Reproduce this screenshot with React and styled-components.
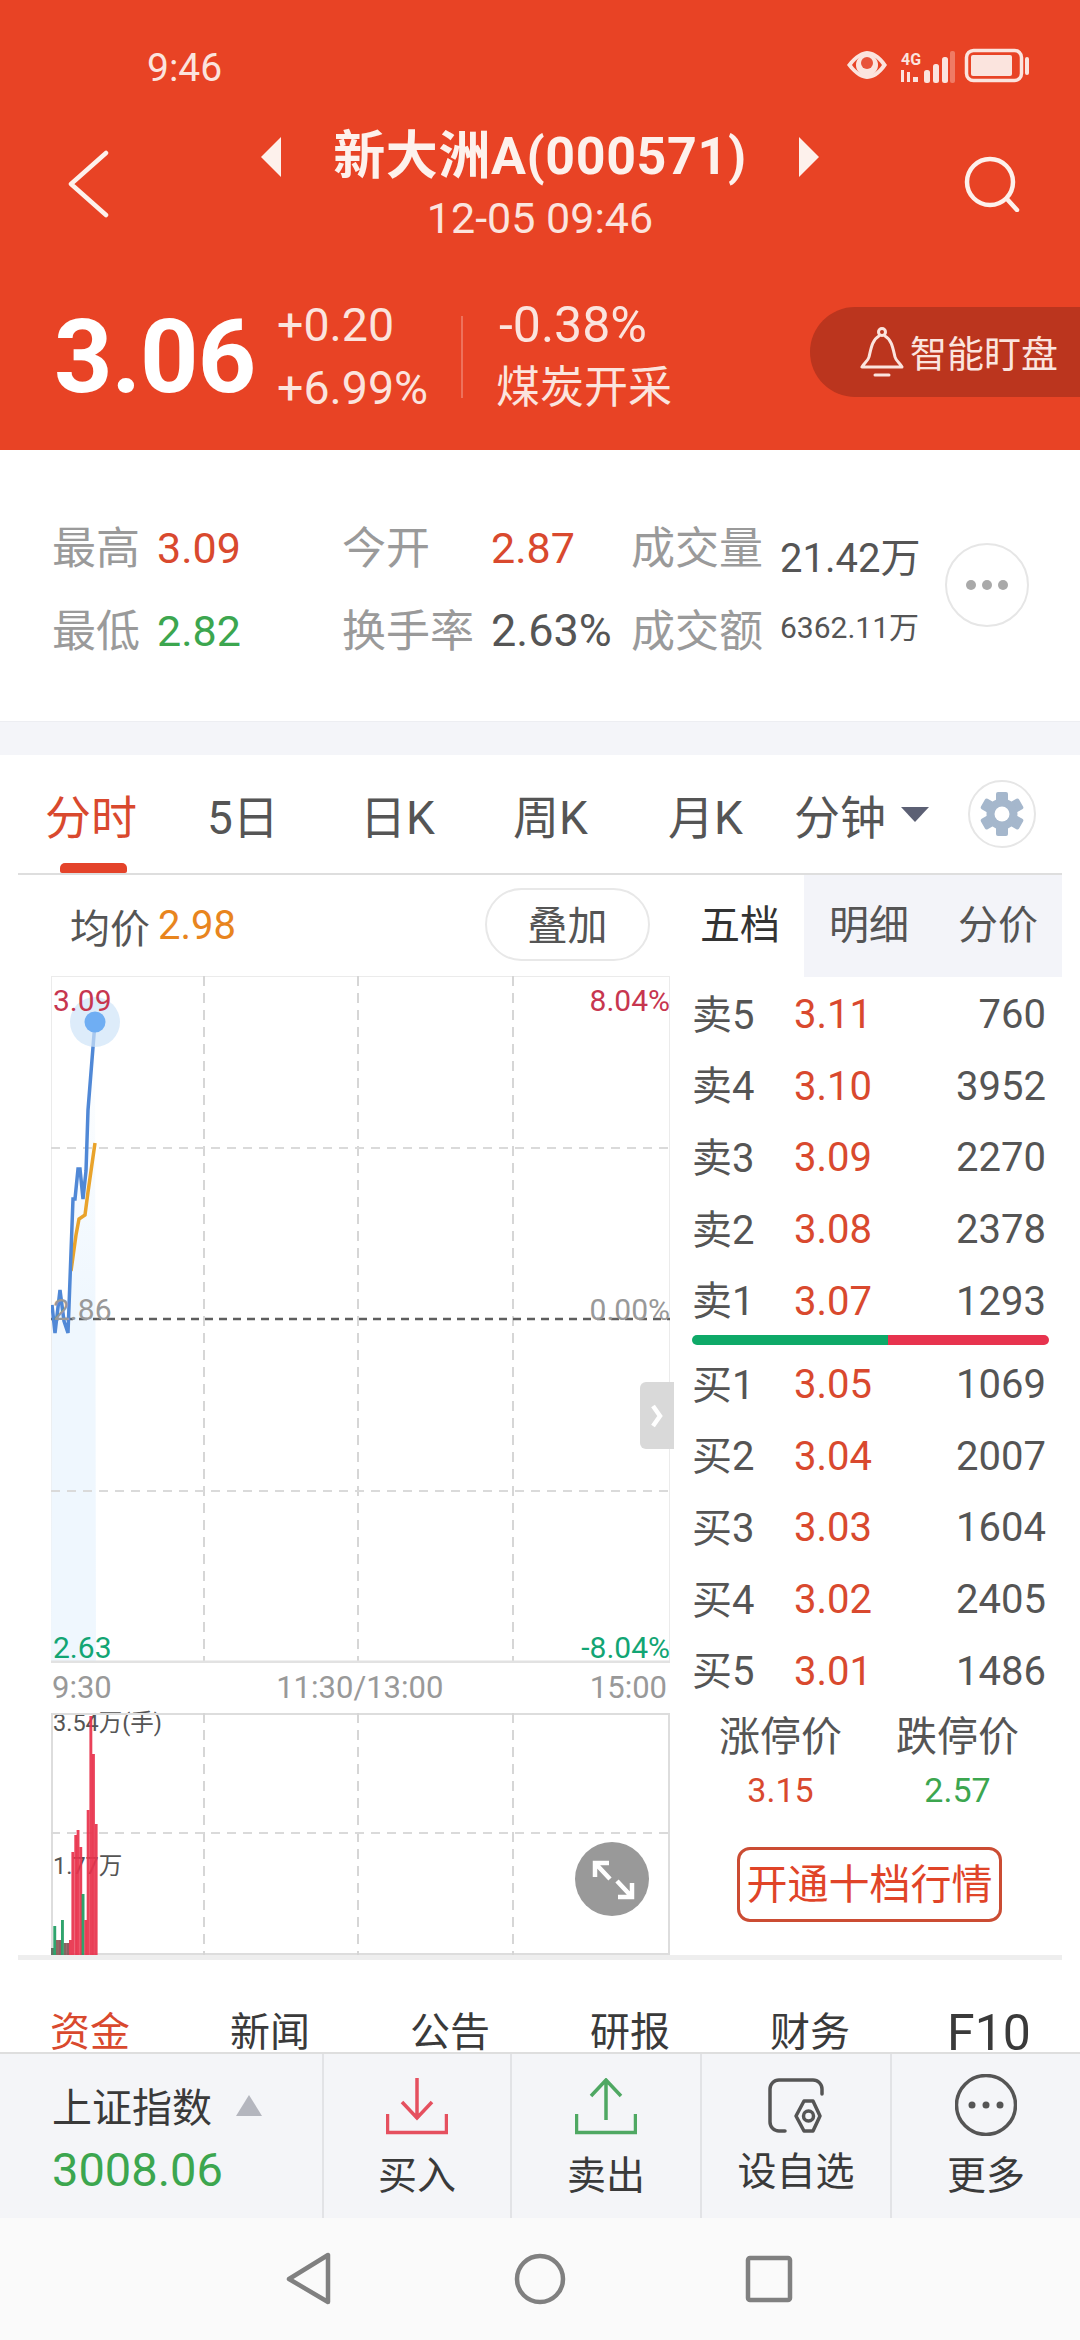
import React from 'react';
import styled, { createGlobalStyle } from 'styled-components';

const RED = '#D9492E';
const GREEN = '#3CA64F';
const CHART_RED = '#C7364F';
const CHART_GREEN = '#12A574';
const LABEL = '#9A9A9A';
const TEXT = '#555';

const GlobalStyle = createGlobalStyle`
  html, body { margin: 0; padding: 0; background: #fff; }
  * { box-sizing: border-box; }
  body { font-family: Roboto, "Noto Sans CJK SC", sans-serif; }
`;

const Page = styled.div`
  width: 1080px;
  height: 2340px;
  display: flex;
  flex-direction: column;
  overflow: hidden;
  background: #fff;
`;

/* red quote header */
const Header = styled.header`
  height: 450px;
  flex: none;
  background: #E84325;
  color: #fff;
`;

const StatusBar = styled.div`
  height: 90px;
  padding: 46px 51px 0 147px;
  display: flex;
  align-items: center;
  justify-content: space-between;
`;

const Clock = styled.span`
  font-size: 39px;
  line-height: 44px;
  color: #FBE4DE;
`;

const StatusIcons = styled.svg`
  display: block;
  margin-top: -2px;
`;

const TitleRow = styled.div`
  margin-top: 37px;
  padding: 0 60px;
  display: grid;
  grid-template-columns: 1fr auto 1fr;
  align-items: center;
`;

const TitleBlock = styled.div`
  display: flex;
  flex-direction: column;
  align-items: center;
`;

const TitleLine = styled.div`
  display: flex;
  align-items: center;
  gap: 52px;
  height: 60px;
`;

const Title = styled.h1`
  margin: 0;
  font-size: 52px;
  line-height: 60px;
  font-weight: 700;
  letter-spacing: 0.6px;
  color: #FDF1EC;
`;

const SubTitle = styled.div`
  margin-top: 8px;
  font-size: 43px;
  line-height: 46px;
  color: #FBE4DE;
`;

const IconSlot = styled.div`
  display: flex;
  justify-content: ${(p) => (p.$end ? 'flex-end' : 'flex-start')};
  padding-left: ${(p) => (p.$end ? 0 : 8)}px;
`;

const PriceRow = styled.div`
  margin-top: 52px;
  height: 127px;
  padding-left: 54px;
  display: flex;
  align-items: center;
`;

const BigPrice = styled.div`
  width: 223px;
  font-size: 102px;
  line-height: 110px;
  font-weight: 700;
  letter-spacing: -1px;
`;

const ChangeCol = styled.div`
  width: 184px;
  font-size: 46.5px;
  line-height: 63px;
  color: #FBE4DE;
`;

const Divider = styled.div`
  width: 2px;
  height: 82px;
  background: rgba(255, 255, 255, 0.25);
`;

const SectorCol = styled(ChangeCol)`
  width: auto;
  margin-left: 33px;
  font-size: 50px;
  div:first-child {
    padding-left: 3px;
  }
  div + div {
    font-size: 44px;
  }
`;

const AlertButton = styled.div`
  margin-left: auto;
  margin-bottom: 9px;
  width: 270px;
  height: 90px;
  padding-left: 50px;
  display: flex;
  align-items: center;
  gap: 6px;
  background: #BB351E;
  border-radius: 45px 0 0 45px;
  font-size: 37px;
  color: #FBE4DE;
  white-space: nowrap;
`;

/* day stats */
const StatsPanel = styled.section`
  height: 272px;
  flex: none;
  padding: 56px 0 0 52px;
  display: flex;
  align-items: flex-start;
  border-bottom: 1px solid #EDEEF2;
`;

const StatsGrid = styled.div`
  display: grid;
  grid-template-columns: 105px 185px 149px 140px 149px 139px;
  grid-auto-rows: 83px;
  align-items: center;
  font-size: 44px;
  white-space: nowrap;
`;

const StatLabel = styled.span`
  color: ${LABEL};
  padding-bottom: 6px;
`;

const StatValue = styled.span`
  color: ${(p) => p.$color || TEXT};
  font-size: ${(p) => p.$size || 43}px;
`;

const StatSmall = styled.span`
  color: ${TEXT};
  font-size: ${(p) => p.$size}px;
  padding-top: ${(p) => p.$shift || 0}px;
  margin-top: ${(p) => p.$lift || 0}px;
`;

const RoundButton = styled.div`
  flex: none;
  width: 84px;
  height: 84px;
  margin: 37px 0 0 26px;
  border: 2px solid #E6E6E6;
  border-radius: 50%;
  display: flex;
  align-items: center;
  justify-content: center;
  gap: 6px;
`;

const Dot = styled.i`
  width: 10px;
  height: 10px;
  border-radius: 50%;
  background: #A9A9A9;
`;

const Gap = styled.div`
  height: 33px;
  flex: none;
  background: #F4F5F9;
`;

/* period tabs */
const PeriodTabs = styled.nav`
  height: 120px;
  flex: none;
  margin: 0 18px;
  padding-left: 27px;
  display: grid;
  grid-template-columns: 162px 153px 153px 155px 126px 107px 67px auto;
  align-items: center;
  border-bottom: 2px solid #DEDEDE;
  font-size: 46px;
  color: ${TEXT};
`;

const PeriodTab = styled.div`
  position: relative;
  height: 118px;
  line-height: 126px;
  color: ${(p) => (p.$active ? RED : TEXT)};
  ${(p) =>
    p.$active &&
    `
    &::after {
      content: '';
      position: absolute;
      left: 15px;
      bottom: 0;
      width: 67px;
      height: 10px;
      border-radius: 5px 5px 2px 2px;
      background: #E4432A;
    }
  `}
`;

const Caret = styled.i`
  width: 0;
  height: 0;
  border-left: 14px solid transparent;
  border-right: 14px solid transparent;
  border-top: 15px solid #5C6074;
`;

const GearButton = styled.div`
  width: 68px;
  height: 68px;
  border: 2px solid #E6E6E6;
  border-radius: 50%;
  display: flex;
  align-items: center;
  justify-content: center;
`;

/* chart and order book */
const Body = styled.div`
  height: 1085px;
  flex: none;
  margin: 0 18px;
  padding-left: 33px;
  display: flex;
  border-bottom: 5px solid #EEEEEE;
`;

const ChartCol = styled.div`
  width: 619px;
  flex: none;
`;

const ChartHead = styled.div`
  height: 101px;
  padding: 0 20px 0 19px;
  display: flex;
  align-items: center;
  font-size: 40px;
  color: ${TEXT};
`;

const AvgValue = styled.span`
  margin-left: 8px;
  color: #E8851E;
`;

const OverlayButton = styled.div`
  margin: -2px 0 0 auto;
  width: 165px;
  height: 73px;
  border: 2px solid #E8E8E8;
  border-radius: 37px;
  text-align: center;
  line-height: 73px;
  color: ${TEXT};
`;

const ChartBox = styled.div`
  position: relative;
  height: ${(p) => p.$height}px;
`;

const ChartSvg = styled.svg`
  display: block;
  position: relative;
`;

const ChartLabel = styled.span`
  position: absolute;
  line-height: 36px;
  font-size: ${(p) => p.$size || 30}px;
  color: ${(p) => p.$color};
  top: ${(p) => p.$top}px;
  ${(p) => (p.$right ? 'right: 0;' : 'left: 2px;')}
  white-space: nowrap;
`;

const SideHandle = styled.div`
  position: absolute;
  top: 406px;
  right: -4px;
  width: 34px;
  height: 67px;
  border-radius: 6px 0 0 6px;
  background: #D9D9D9;
  display: flex;
  align-items: center;
  justify-content: center;
`;

const ExpandButton = styled.div`
  position: absolute;
  left: 524px;
  top: 129px;
  width: 74px;
  height: 74px;
  border-radius: 50%;
  background: #999;
`;

const TimeAxis = styled.div`
  height: 50px;
  padding: 0 3px 2px 1px;
  display: flex;
  align-items: center;
  justify-content: space-between;
  font-size: 31px;
  color: #999;
`;

const AxisMiddle = styled.span`
  margin-left: 18px;
`;

const BookCol = styled.div`
  width: 370px;
  margin-left: 22px;
  flex: none;
`;

const BookTabs = styled.div`
  height: 100px;
  display: grid;
  grid-template-columns: 112px 129px 129px;
  font-size: 40px;
`;

const BookTab = styled.div`
  line-height: 102px;
  padding-left: ${(p) => (p.$active ? 8 : 25)}px;
  color: ${(p) => (p.$active ? '#333' : TEXT)};
  background: ${(p) => (p.$active ? '#fff' : '#F3F4F9')};
`;

const BookList = styled.div`
  margin-top: 4px;
  width: 354px;
`;

const BookRow = styled.div`
  height: 71.6px;
  display: grid;
  grid-template-columns: 102px 1fr auto;
  align-items: center;
  font-size: 40px;
  color: ${TEXT};
`;

const BookName = styled.span`
  padding-bottom: 6px;
`;

const BookPrice = styled.span`
  color: ${RED};
`;

const RatioBar = styled.div`
  width: 357px;
  height: 10px;
  margin: -2px 0 2px;
  display: flex;
  border-radius: 5px;
  overflow: hidden;
`;

const RatioPart = styled.div`
  background: ${(p) => p.$color};
`;

const LimitGrid = styled.div`
  margin-top: 10px;
  width: 354px;
  display: grid;
  grid-template-columns: 1fr 1fr;
  text-align: center;
`;

const LimitTitle = styled.div`
  font-size: 41px;
  line-height: 40px;
  color: ${TEXT};
`;

const LimitValue = styled.div`
  margin-top: 15px;
  font-size: 34px;
  line-height: 36px;
  color: ${(p) => p.$color};
`;

const UpgradeButton = styled.div`
  margin: 39px 0 0 45px;
  width: 265px;
  height: 75px;
  border: 3px solid #CB4C33;
  border-radius: 13px;
  text-align: center;
  line-height: 71px;
  font-size: 41px;
  color: #E04428;
  white-space: nowrap;
`;

/* news tabs, cut off by the trade bar */
const InfoTabs = styled.div`
  height: 92px;
  flex: none;
  padding: 47px 0 0 50px;
  display: grid;
  grid-template-columns: 180px 180px 180px 180px 177px auto;
  overflow: hidden;
  font-size: 40px;
  line-height: 52px;
  color: #3A3A3A;
`;

const InfoTab = styled.div`
  color: ${(p) => (p.$active ? RED : '#3A3A3A')};
  font-size: ${(p) => p.$size || 40}px;
`;

/* trade bar */
const TradeBar = styled.div`
  height: 166px;
  flex: none;
  display: grid;
  grid-template-columns: 322px 188px 190px 190px 190px;
  background: #F4F5F8;
  border-top: 2px solid #DEDEDE;
`;

const IndexCell = styled.div`
  padding: 29px 0 0 52px;
`;

const IndexName = styled.div`
  display: flex;
  align-items: center;
  gap: 24px;
  font-size: 40px;
  line-height: 52px;
  color: #3A3A3A;
`;

const IndexCaret = styled.i`
  width: 0;
  height: 0;
  margin-top: -8px;
  border-left: 13px solid transparent;
  border-right: 13px solid transparent;
  border-bottom: 21px solid #B4B6BE;
`;

const IndexValue = styled.div`
  margin-top: 9px;
  font-size: 47px;
  line-height: 52px;
  color: ${GREEN};
`;

const ActionCell = styled.div`
  border-left: 2px solid #E2E3E6;
  padding-top: ${(p) => p.$top ?? 24}px;
  display: flex;
  flex-direction: column;
  align-items: center;
`;

const ActionLabel = styled.div`
  margin-top: ${(p) => p.$gap ?? 13}px;
  font-size: 39px;
  line-height: 50px;
  color: #3A3A3A;
`;

/* system navigation */
const NavBar = styled.div`
  flex: 1;
  background: #FAFAFA;
  padding-left: 286px;
  display: flex;
  align-items: center;
`;

const asks = [
  ['卖5', '3.11', '760'],
  ['卖4', '3.10', '3952'],
  ['卖3', '3.09', '2270'],
  ['卖2', '3.08', '2378'],
  ['卖1', '3.07', '1293'],
];

const bids = [
  ['买1', '3.05', '1069'],
  ['买2', '3.04', '2007'],
  ['买3', '3.03', '1604'],
  ['买4', '3.02', '2405'],
  ['买5', '3.01', '1486'],
];

// minute price line, x and y measured from the top left of the chart
const priceLine =
  '1,329 4,357 9,314 13,345 17,357 22,223 24,223 27,193 29,193 32,223 35,195 37,134 44,46';
const avgLine = '20,295 25,259 28,243 34,239 37,216 44,167';

const bars = [
  [0, 7, '#5E6B5C'], [2.3, 29, '#1F9D62'], [5, 15, '#8A5A55'], [7.6, 15, '#8A4F55'],
  [10, 35, '#1F9D62'], [12.8, 12, '#7C5A55'], [15.4, 12, '#8A4F55'], [18, 15, '#E8334C'],
  [20.4, 103, '#E8334C'], [23.3, 120, '#E8334C'], [25.6, 125, '#E8334C'], [28.3, 108, '#E8334C'],
  [30.6, 61, '#1F9D62'], [33.3, 35, '#E8334C'], [35.7, 145, '#E8334C'], [38.4, 239, '#E8334C'],
  [41, 201, '#E8334C'], [43.7, 131, '#E8334C'],
];

const Grid = ({ height, rows, dark }) => (
  <>
    {[153, 307, 462].map((x) => (
      <line key={x} x1={x} x2={x} y1="0" y2={height} stroke="#D6D6D6" strokeWidth="2" strokeDasharray="10 7" />
    ))}
    {rows.map((y) => (
      <line key={y} x1="0" x2="619" y1={y} y2={y} stroke="#DADADA" strokeWidth="2" strokeDasharray="9 7" />
    ))}
    {dark && <line x1="0" x2="619" y1={dark} y2={dark} stroke="#5E5E5E" strokeWidth="2.5" strokeDasharray="8 6" />}
  </>
);

const PriceChart = () => (
  <ChartSvg width="619" height="687" viewBox="0 0 619 687">
    <defs>
      <linearGradient id="bandFill" x1="0" x2="0" y1="0" y2="1">
        <stop offset="0" stopColor="#EFF7FE" stopOpacity="0" />
        <stop offset="0.45" stopColor="#EFF7FE" />
      </linearGradient>
    </defs>
    <rect x="0.5" y="0.5" width="618" height="686" fill="none" stroke="#EBEBEB" />
    <polygon points={`0,687 ${priceLine} 45,687`} fill="url(#bandFill)" />
    <Grid height={687} rows={[172, 515]} dark={343} />
    <line x1="0" x2="619" y1="686" y2="686" stroke="#E2E2E2" strokeWidth="3" />
    <polyline points={avgLine} fill="none" stroke="#E9A32B" strokeWidth="3.5" />
    <polyline points={priceLine} fill="none" stroke="#5088D6" strokeWidth="3.5" />
    <circle cx="44" cy="46" r="25" fill="#CFE4F8" opacity="0.7" />
    <circle cx="44" cy="46" r="10.5" fill="#6FAEF3" />
  </ChartSvg>
);

const VolumeChart = () => (
  <ChartSvg width="619" height="242" viewBox="0 0 619 242">
    <rect x="1" y="1" width="617" height="240" fill="none" stroke="#DDDDDD" strokeWidth="2" />
    <Grid height={242} rows={[120]} />
    {bars.map(([x, h, fill]) => (
      <rect key={x} x={x} y={242 - h} width="2.9" height={h} fill={fill} opacity="0.93" />
    ))}
  </ChartSvg>
);

const Gear = () => (
  <svg width="46" height="46" viewBox="0 0 46 46">
    {[0, 60, 120, 180, 240, 300].map((a) => (
      <rect key={a} x="17" y="1" width="12" height="12" rx="2" fill="#A5B7CC" transform={`rotate(${a} 23 23)`} />
    ))}
    <circle cx="23" cy="23" r="15.5" fill="#A5B7CC" />
    <circle cx="23" cy="23" r="7.5" fill="#fff" />
  </svg>
);

const App = () => (
  <Page>
    <GlobalStyle />
    <Header>
      <StatusBar>
        <Clock>9:46</Clock>
        <StatusIcons width="183" height="38" viewBox="0 0 183 38" fill="#FBE4DE">
          <path d="M1 17 C9 6 17 3 21 3 C26 3 34 6 41 17 C34 28 26 31 21 31 C17 31 9 28 1 17 Z M6 17 C11 24 17 27 21 27 C26 27 31 24 36 17 C31 10 26 7 21 7 C17 7 11 10 6 17 Z" />
          <circle cx="21" cy="17" r="11" />
          <circle cx="21" cy="15" r="6" fill="#E8533A" />
          <text x="55" y="17" fontFamily="Roboto" fontSize="16" fontWeight="700" textLength="20" lengthAdjust="spacingAndGlyphs">4G</text>
          <path d="M55 22 h3 v12 h-3 z M61 24 h3 v10 h-3 z M67 29 h5 v5 h-5 z" />
          <rect x="78" y="22" width="6" height="13" rx="2.5" />
          <rect x="87" y="16" width="6" height="19" rx="2.5" />
          <rect x="96" y="9" width="6" height="26" rx="2.5" />
          <rect x="104" y="3" width="5" height="32" rx="2" opacity="0.35" />
          <rect x="120.5" y="2.5" width="55" height="30" rx="7" fill="none" stroke="#FBE4DE" strokeWidth="3.5" />
          <rect x="125" y="7" width="41" height="21" rx="2" />
          <rect x="179" y="9" width="4" height="18" rx="2" />
        </StatusIcons>
      </StatusBar>

      <TitleRow>
        <IconSlot>
          <svg width="42" height="68" viewBox="0 0 42 68" fill="none" stroke="#FDF1EC" strokeWidth="4.5" strokeLinecap="round" strokeLinejoin="round">
            <path d="M38 3 L3 34 L38 65" />
          </svg>
        </IconSlot>
        <TitleBlock>
          <TitleLine>
            <svg width="20" height="40" viewBox="0 0 20 40" fill="#FDF1EC"><path d="M20 0 V40 L0 20 Z" /></svg>
            <Title>新大洲A(000571)</Title>
            <svg width="20" height="40" viewBox="0 0 20 40" fill="#FDF1EC"><path d="M0 0 V40 L20 20 Z" /></svg>
          </TitleLine>
          <SubTitle>12-05 09:46</SubTitle>
        </TitleBlock>
        <IconSlot $end>
          <svg width="56" height="56" viewBox="0 0 56 56" fill="none" stroke="#FDF1EC" strokeWidth="4.5" strokeLinecap="round">
            <circle cx="26" cy="26" r="23" />
            <path d="M43 43 L53 54" />
          </svg>
        </IconSlot>
      </TitleRow>

      <PriceRow>
        <BigPrice>3.06</BigPrice>
        <ChangeCol>
          <div>+0.20</div>
          <div>+6.99%</div>
        </ChangeCol>
        <Divider />
        <SectorCol>
          <div>-0.38%</div>
          <div>煤炭开采</div>
        </SectorCol>
        <AlertButton>
          <svg width="44" height="50" viewBox="0 0 44 50" fill="none" stroke="#FBE4DE" strokeWidth="3" strokeLinecap="round" strokeLinejoin="round">
            <circle cx="22" cy="5" r="3.5" />
            <path d="M19 9 C12 13 11 22 9 30 C8 34 4 36 2 40 H42 C40 36 36 34 35 30 C33 22 32 13 25 9" />
            <path d="M15 48 H29" />
          </svg>
          智能盯盘
        </AlertButton>
      </PriceRow>
    </Header>

    <StatsPanel>
      <StatsGrid>
        <StatLabel>最高</StatLabel>
        <StatValue $color={RED}>3.09</StatValue>
        <StatLabel>今开</StatLabel>
        <StatValue $color={RED}>2.87</StatValue>
        <StatLabel>成交量</StatLabel>
        <StatSmall $size={40} $shift={14}>21.42万</StatSmall>
        <StatLabel>最低</StatLabel>
        <StatValue $color={GREEN}>2.82</StatValue>
        <StatLabel>换手率</StatLabel>
        <StatValue $size={45}>2.63%</StatValue>
        <StatLabel>成交额</StatLabel>
        <StatSmall $size={30} $lift={-12}>6362.11万</StatSmall>
      </StatsGrid>
      <RoundButton>
        <Dot />
        <Dot />
        <Dot />
      </RoundButton>
    </StatsPanel>

    <Gap />

    <PeriodTabs>
      <PeriodTab $active>分时</PeriodTab>
      <PeriodTab>5日</PeriodTab>
      <PeriodTab>日K</PeriodTab>
      <PeriodTab>周K</PeriodTab>
      <PeriodTab>月K</PeriodTab>
      <PeriodTab>分钟</PeriodTab>
      <Caret />
      <GearButton>
        <Gear />
      </GearButton>
    </PeriodTabs>

    <Body>
      <ChartCol>
        <ChartHead>
          均价<AvgValue>2.98</AvgValue>
          <OverlayButton>叠加</OverlayButton>
        </ChartHead>
        <ChartBox $height={687}>
          <PriceChart />
          <ChartLabel $top={7} $color={CHART_RED}>3.09</ChartLabel>
          <ChartLabel $top={7} $right $color={CHART_RED}>8.04%</ChartLabel>
          <ChartLabel $top={316} $color="#999">2.86</ChartLabel>
          <ChartLabel $top={316} $right $color="#999">0.00%</ChartLabel>
          <ChartLabel $top={654} $color={CHART_GREEN}>2.63</ChartLabel>
          <ChartLabel $top={654} $right $color={CHART_GREEN}>-8.04%</ChartLabel>
          <SideHandle>
            <svg width="14" height="26" viewBox="0 0 14 26" fill="none" stroke="#fff" strokeWidth="4.5"><path d="M3 3 L10 13 L3 23" /></svg>
          </SideHandle>
        </ChartBox>
        <TimeAxis>
          <span>9:30</span>
          <AxisMiddle>11:30/13:00</AxisMiddle>
          <span>15:00</span>
        </TimeAxis>
        <ChartBox $height={242}>
          {/* the axis labels sit under the bars */}
          <ChartLabel $top={-8} $size={23.5} $color={TEXT}>3.54万(手)</ChartLabel>
          <ChartLabel $top={135} $size={23.5} $color={TEXT}>1.77万</ChartLabel>
          <VolumeChart />
          <ExpandButton>
            <svg width="74" height="74" viewBox="0 0 74 74" fill="none" stroke="#fff" strokeWidth="4.5">
              <path d="M20 35 V21 H34 M20 21 L35 37" />
              <path d="M57 41 V55 H43 M57 55 L42 39" />
            </svg>
          </ExpandButton>
        </ChartBox>
      </ChartCol>

      <BookCol>
        <BookTabs>
          <BookTab $active>五档</BookTab>
          <BookTab>明细</BookTab>
          <BookTab>分价</BookTab>
        </BookTabs>
        <BookList>
          {asks.map(([name, price, qty]) => (
            <BookRow key={name}>
              <BookName>{name}</BookName>
              <BookPrice>{price}</BookPrice>
              <span>{qty}</span>
            </BookRow>
          ))}
        </BookList>
        <RatioBar>
          <RatioPart $color="#0EA968" style={{ width: '55%' }} />
          <RatioPart $color="#E7334E" style={{ width: '45%' }} />
        </RatioBar>
        <BookList>
          {bids.map(([name, price, qty]) => (
            <BookRow key={name}>
              <BookName>{name}</BookName>
              <BookPrice>{price}</BookPrice>
              <span>{qty}</span>
            </BookRow>
          ))}
        </BookList>
        <LimitGrid>
          <div>
            <LimitTitle>涨停价</LimitTitle>
            <LimitValue $color={RED}>3.15</LimitValue>
          </div>
          <div>
            <LimitTitle>跌停价</LimitTitle>
            <LimitValue $color={GREEN}>2.57</LimitValue>
          </div>
        </LimitGrid>
        <UpgradeButton>开通十档行情</UpgradeButton>
      </BookCol>
    </Body>

    <InfoTabs>
      <InfoTab $active>资金</InfoTab>
      <InfoTab>新闻</InfoTab>
      <InfoTab>公告</InfoTab>
      <InfoTab>研报</InfoTab>
      <InfoTab>财务</InfoTab>
      <InfoTab $size={50}>F10</InfoTab>
    </InfoTabs>

    <TradeBar>
      <IndexCell>
        <IndexName>
          上证指数
          <IndexCaret />
        </IndexName>
        <IndexValue>3008.06</IndexValue>
      </IndexCell>
      <ActionCell>
        <svg width="62" height="60" viewBox="0 0 62 60" fill="none" stroke="#E5505F" strokeWidth="3.5">
          <path d="M31 0 V41 M16 24 L31 40 L46 24" />
          <path d="M1.5 36 V54.5 H60.5 V36" />
        </svg>
        <ActionLabel>买入</ActionLabel>
      </ActionCell>
      <ActionCell>
        <svg width="62" height="60" viewBox="0 0 62 60" fill="none" stroke="#4FA863" strokeWidth="3.5">
          <path d="M31 1 V42 M16 18 L31 2 L46 18" />
          <path d="M1.5 36 V54.5 H60.5 V36" />
        </svg>
        <ActionLabel>卖出</ActionLabel>
      </ActionCell>
      <ActionCell>
        <svg width="56" height="60" viewBox="0 0 56 60" fill="none" stroke="#555" strokeWidth="3.5" strokeLinecap="round">
          <path d="M54 16 V11 A9 9 0 0 0 45 2 H11 A9 9 0 0 0 2 11 V44 A9 9 0 0 0 11 53 H17" />
          <path d="M28 38 L36 23 H45 L52 38 L45 53 H36 Z" strokeLinejoin="round" />
          <circle cx="40.5" cy="38" r="5" />
        </svg>
        <ActionLabel $gap={9}>设自选</ActionLabel>
      </ActionCell>
      <ActionCell $top={20}>
        <svg width="62" height="62" viewBox="0 0 62 62" fill="none" stroke="#555" strokeWidth="3.5">
          <circle cx="31" cy="31" r="29.5" />
          <circle cx="17" cy="31" r="3.5" fill="#555" stroke="none" />
          <circle cx="31" cy="31" r="3.5" fill="#555" stroke="none" />
          <circle cx="45" cy="31" r="3.5" fill="#555" stroke="none" />
        </svg>
        <ActionLabel $gap={15}>更多</ActionLabel>
      </ActionCell>
    </TradeBar>

    <NavBar>
      <svg width="510" height="54" viewBox="0 0 510 54" fill="none" stroke="#808080" strokeWidth="4.5" strokeLinejoin="round">
        <path d="M42 3 V50 L3 27 Z" />
        <circle cx="254" cy="27" r="23" />
        <rect x="462" y="6" width="42" height="42" rx="2" />
      </svg>
    </NavBar>
  </Page>
);

export default App;
